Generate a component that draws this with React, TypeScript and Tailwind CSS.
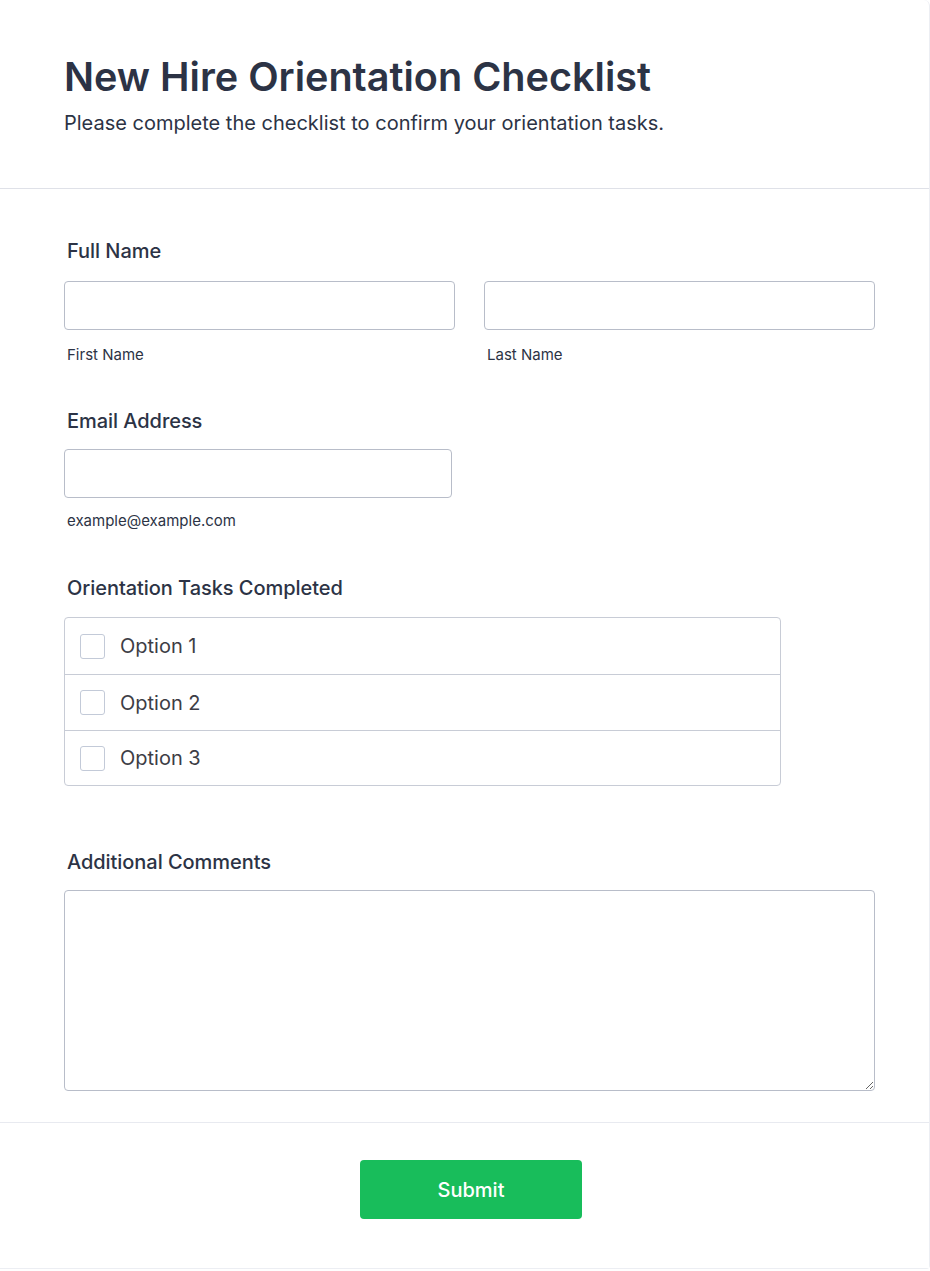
import React from "react";

const font = { fontFamily: "Inter, 'Noto Sans', sans-serif" };

function Label({ children }: { children: React.ReactNode }) {
  return (
    <div className="pl-[3px] text-[20px] leading-[26px] font-medium text-[#2c3345] tracking-[-0.05px]">{children}</div>
  );
}

function Sub({ children, tight }: { children: React.ReactNode; tight?: boolean }) {
  return (
    <div className={(tight ? "mt-[13px]" : "mt-[15px]") + " pl-[3px] text-[15px] leading-[20px] text-[#2c3345]"}>
      {children}
    </div>
  );
}

const rowHeights = ["h-[56px]", "h-[56px]", "h-[55px]"];

export default function App() {
  return (
    <div style={font} className="w-[930px] min-h-[1271px] bg-white">
      <div className="w-[930px] border-r border-b border-[#eceef3] rounded-br-[4px] rounded-tr-[6px]">
        <div className="px-16 pt-[53px] pb-[51px] border-b border-[#dfe1e8]">
          <h1 className="text-[39.6px] leading-[48px] font-semibold text-[#2c3345]">
            New Hire Orientation Checklist
          </h1>
          <p className="mt-[8px] text-[20px] leading-[28px] text-[#2c3345]">
            Please complete the checklist to confirm your orientation tasks.
          </p>
        </div>

        <div className="pl-16 pr-[54px] pt-[49px] pb-[31px] border-b border-[#e8eaf0]">
          <Label>Full Name</Label>
          <div className="mt-[17px] flex gap-[29px]">
            <div className="flex-1">
              <input className="w-full h-[49px] rounded-[4px] border border-[#b8bdc9] bg-white outline-none" />
              <Sub>First Name</Sub>
            </div>
            <div className="flex-1">
              <input className="w-full h-[49px] rounded-[4px] border border-[#b8bdc9] bg-white outline-none" />
              <Sub>Last Name</Sub>
            </div>
          </div>

          <div className="mt-[43px]">
            <Label>Email Address</Label>
            <input className="mt-[15px] block w-[388px] h-[49px] rounded-[4px] border border-[#b8bdc9] bg-white outline-none" />
            <Sub tight>example@example.com</Sub>
          </div>

          <div className="mt-[44px]">
            <Label>Orientation Tasks Completed</Label>
            <div className="mt-[16px] w-[717px] rounded-[4px] border border-[#c8ccd6] bg-white">
              {["Option 1", "Option 2", "Option 3"].map((o, i) => (
                <div
                  key={o}
                  className={
                    "flex items-center pl-[15px] " +
                    rowHeights[i] +
                    (i > 0 ? " border-t border-[#c8ccd6]" : "")
                  }
                >
                  <span className="w-[25px] h-[25px] rounded-[3px] border border-[#c3cad8] bg-white" />
                  <span className="ml-[15px] text-[20px] leading-[26px] text-[#3d3d45]">{o}</span>
                </div>
              ))}
            </div>
          </div>

          <div className="mt-[63px]">
            <Label>Additional Comments</Label>
            <textarea className="mt-[15px] block w-full h-[201px] rounded-[4px] border border-[#b8bdc9] bg-white outline-none resize-y" />
          </div>
        </div>

        <div className="flex justify-center pt-[37px] pb-[49px] bg-white">
          <button className="ml-[13px] w-[222px] h-[59px] rounded-[4px] bg-[#18bd5b] text-white text-[20px] font-medium">
            Submit
          </button>
        </div>
      </div>
    </div>
  );
}
